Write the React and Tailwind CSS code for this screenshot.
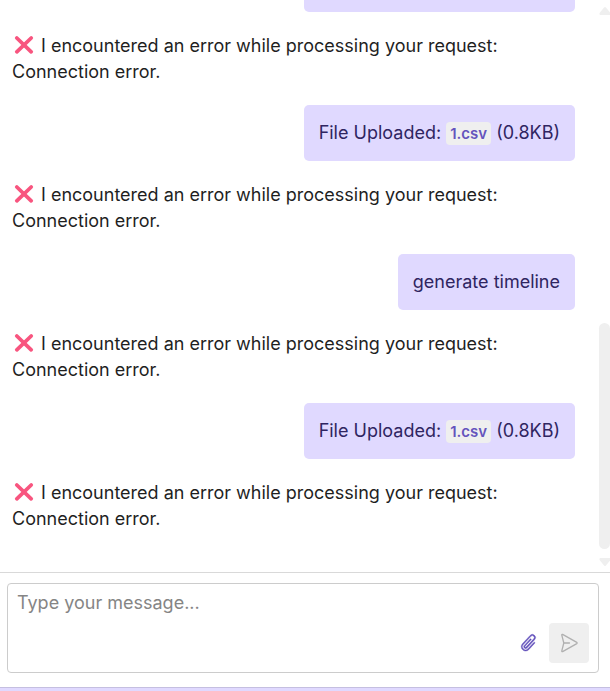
import React, { useState } from "react";
import { BsPaperclip } from "react-icons/bs";

const messages = [
  { id: 1, from: "user", file: "1.csv", size: "0.8KB" },
  { id: 2, from: "bot" },
  { id: 3, from: "user", file: "1.csv", size: "0.8KB" },
  { id: 4, from: "bot" },
  { id: 5, from: "user", text: "generate timeline" },
  { id: 6, from: "bot" },
  { id: 7, from: "user", file: "1.csv", size: "0.8KB" },
  { id: 8, from: "bot" },
];

function CrossMark() {
  return (
    <svg viewBox="0 0 24 24" className="inline-block w-6 h-6 mr-[5px] align-middle -mt-1" aria-hidden="true">
      <path
        d="M4.8 5 L19.2 18.8 M19.2 5 L4.8 18.8"
        stroke="#f8557f"
        strokeWidth="3.8"
        strokeLinecap="round"
      />
    </svg>
  );
}

function SendIcon() {
  return (
    <svg
      viewBox="0 0 20 20"
      className="w-5 h-5"
      fill="none"
      stroke="currentColor"
      strokeWidth="1.3"
      strokeLinecap="round"
      strokeLinejoin="round"
      aria-hidden="true"
    >
      <path d="M3.6 1.4 L17.8 9.4 Q18.6 10 17.8 10.6 L3.6 18.6 Q2.6 18.8 2.8 17.8 L4.8 10 L2.8 2.2 Q2.6 1.2 3.6 1.4 Z M4.8 10 H10.5" />
    </svg>
  );
}

function ErrorMessage() {
  return (
    <p className="shrink-0 max-w-[520px] pt-px">
      <CrossMark />
      I encountered an error while processing your request: Connection error.
    </p>
  );
}

function UserMessage({ message }) {
  return (
    <div className="shrink-0 self-end rounded-[5px] bg-[#e0d9ff] text-[#2f2561] p-[15px]">
      {message.file ? (
        <>
          File Uploaded:{" "}
          <code className="rounded-sm bg-[#efefef] px-1 py-[2px] font-[Inter,sans-serif] text-[15px] leading-none font-semibold text-[#6554bd]">
            {message.file}
          </code>{" "}
          ({message.size})
        </>
      ) : (
        message.text
      )}
    </div>
  );
}

function ScrollTrack() {
  return (
    <div className="w-[11px] shrink-0 flex flex-col items-center pt-[7px] pb-[6px]" aria-hidden="true">
      <svg viewBox="0 0 12 8" className="w-3 h-2 shrink-0" fill="#efefef">
        <path d="M5 .6Q6 -.4 7 .6L11.4 6Q12 8 10.5 8H1.5Q0 8 .6 6Z" />
      </svg>
      <div className="flex-1 w-full flex flex-col justify-end pb-[9px]">
        <div className="h-2/5 min-h-[226px] rounded-full bg-[#efefef]"></div>
      </div>
      <svg viewBox="0 0 12 8" className="w-3 h-2 shrink-0 rotate-180" fill="#efefef">
        <path d="M5 .6Q6 -.4 7 .6L11.4 6Q12 8 10.5 8H1.5Q0 8 .6 6Z" />
      </svg>
    </div>
  );
}

function App() {
  const [text, setText] = useState("");

  return (
    <div className="h-screen flex flex-col bg-white font-[Inter,sans-serif] text-[18px] leading-[26px] text-[#1f1f1f]">
      <main className="flex-1 min-h-0 flex">
        <div className="flex-1 min-w-0 overflow-hidden flex flex-col justify-end gap-5 pl-3 pr-6 pb-10">
          {messages.map((message) =>
            message.from === "user" ? (
              <UserMessage key={message.id} message={message} />
            ) : (
              <ErrorMessage key={message.id} />
            )
          )}
        </div>
        <ScrollTrack />
      </main>

      <form
        className="shrink-0 border-t border-[#d9d9d9] pt-[10px] pb-[14px] pl-[7px] pr-[11px]"
        onSubmit={(e) => e.preventDefault()}
      >
        <div className="relative">
          <textarea
            aria-label="Message"
            placeholder="Type your message..."
            value={text}
            onChange={(e) => setText(e.target.value)}
            className="block w-full h-[90px] resize-none rounded-sm border border-[#cccccc] px-[9px] py-[6px] outline-none placeholder:text-[#858585]"
          />
          <div className="absolute right-[10px] bottom-[10px] flex items-center">
            <button
              type="button"
              aria-label="Attach file"
              className="w-10 h-10 flex items-center justify-center text-[#6554bd]"
            >
              <BsPaperclip className="w-5 h-5 rotate-[43deg]" strokeWidth="0.3" />
            </button>
            <button
              type="submit"
              aria-label="Send"
              disabled={!text}
              className="w-10 h-10 flex items-center justify-center rounded-sm bg-[#efefef] text-[#b0b0b0]"
            >
              <SendIcon />
            </button>
          </div>
        </div>
      </form>

      <footer className="h-1 shrink-0 border-t border-[#c5bfe0] bg-[#e0d9ff]"></footer>
    </div>
  );
}

export default App;
